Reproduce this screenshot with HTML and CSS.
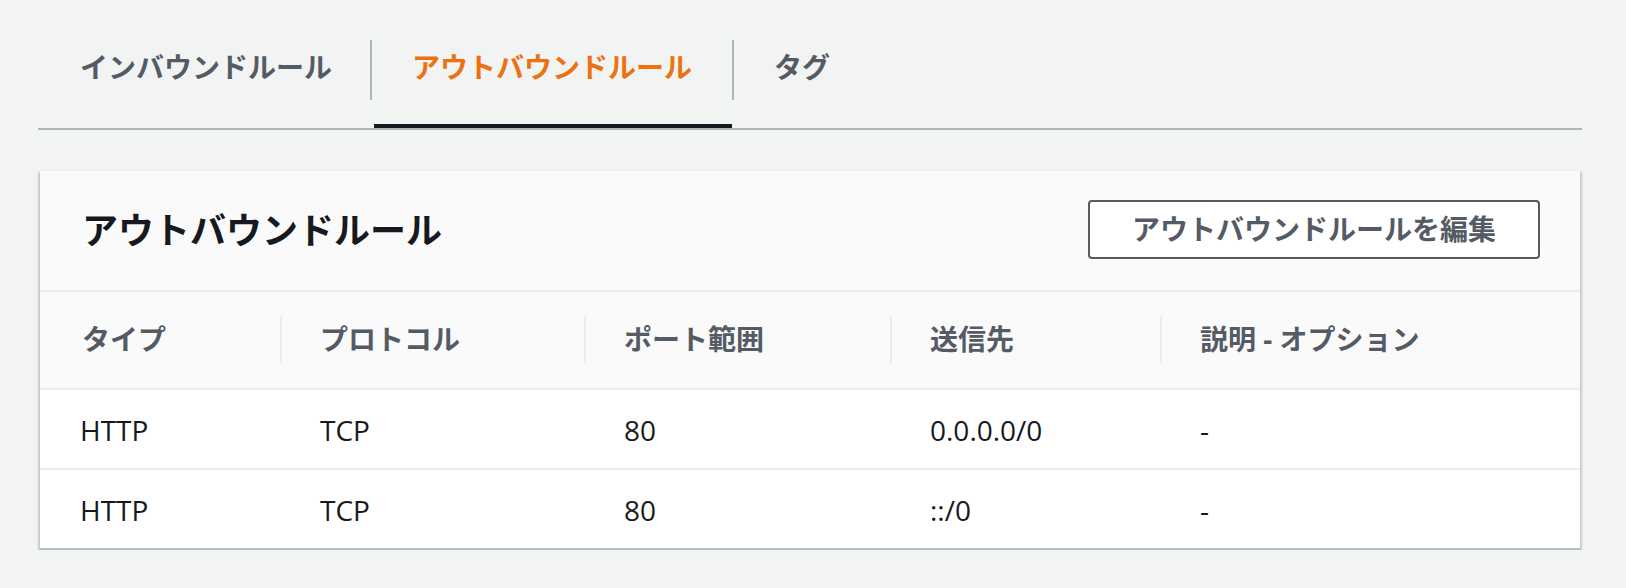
FILE: index.html
```html
<!DOCTYPE html>
<html lang="ja">
<head>
<meta charset="utf-8">
<title>アウトバウンドルール</title>
<link rel="stylesheet" href="styles.css">
</head>
<body>
<div class="page">
  <div class="tabs">
    <div class="tab"><span class="tab-link">インバウンドルール</span></div>
    <div class="tab tab-active"><span class="tab-link">アウトバウンドルール</span></div>
    <div class="tab"><span class="tab-link">タグ</span></div>
  </div>

  <div class="card">
    <div class="card-header">
      <h2 class="card-title">アウトバウンドルール</h2>
      <button class="btn">アウトバウンドルールを編集</button>
    </div>
    <table class="rules">
      <colgroup>
        <col class="c1"><col class="c2"><col class="c3"><col class="c4"><col class="c5">
      </colgroup>
      <thead>
        <tr>
          <th>タイプ</th>
          <th class="sep">プロトコル</th>
          <th class="sep">ポート範囲</th>
          <th class="sep">送信先</th>
          <th class="sep">説明 - オプション</th>
        </tr>
      </thead>
      <tbody>
        <tr>
          <td>HTTP</td>
          <td>TCP</td>
          <td>80</td>
          <td>0.0.0.0/0</td>
          <td>-</td>
        </tr>
        <tr>
          <td>HTTP</td>
          <td>TCP</td>
          <td>80</td>
          <td>::/0</td>
          <td>-</td>
        </tr>
      </tbody>
    </table>
  </div>
</div>
</body>
</html>
```

FILE: styles.css
```css
html, body {
  margin: 0;
  padding: 0;
  background: #f2f3f3;
}

body {
  font-family: "Open Sans", "Noto Sans CJK JP", sans-serif;
  font-size: 28px;
  color: #16191f;
}

.page {
  padding: 40px 44px 0 38px;
}

/* Tabs */
.tabs {
  display: flex;
  border-bottom: 2px solid #aab7b8;
}

.tab {
  position: relative;
  padding-bottom: 28px;
}

.tab-link {
  display: block;
  height: 60px;
  box-sizing: border-box;
  padding: 0 38px 6px 42px;
  line-height: 54px;
  font-weight: 700;
  color: #545b64;
  white-space: nowrap;
}

.tab + .tab .tab-link {
  border-left: 2px solid #aab7b8;
  padding-left: 40px;
  padding-right: 40px;
}

.tab-active .tab-link {
  color: #ec7211;
}

.tab-active::after {
  content: "";
  position: absolute;
  left: 4px;
  right: 0;
  bottom: 0;
  height: 4px;
  background: #16191f;
}

/* Card */
.card {
  margin: 41px 2px 0 2px;
  background: #ffffff;
  border-bottom: 2px solid #b4bebf;
  box-shadow: 0 2px 2px 0 rgba(0, 28, 36, 0.2),
              2px 1px 2px 0 rgba(0, 28, 36, 0.15),
              -2px 1px 2px 0 rgba(0, 28, 36, 0.15);
}

.card-header {
  display: flex;
  align-items: center;
  justify-content: space-between;
  height: 119px;
  padding: 0 40px 0 42px;
  background: #fafafa;
  border-bottom: 2px solid #eaeded;
}

.card-title {
  margin: 0;
  font-size: 36px;
  line-height: 44px;
  font-weight: 700;
  color: #16191f;
}

.btn {
  font-family: "Open Sans", "Noto Sans CJK JP", sans-serif;
  font-size: 28px;
  font-weight: 700;
  color: #545b64;
  background: #ffffff;
  border: 2px solid #545b64;
  border-radius: 4px;
  height: 59px;
  padding: 0 42px;
  line-height: 53px;
  margin-top: -2px;
}

/* Table */
.rules {
  width: 100%;
  border-collapse: collapse;
  table-layout: fixed;
}

.c1 { width: 240px; }
.c2 { width: 304px; }
.c3 { width: 306px; }
.c4 { width: 270px; }
.c5 { width: 420px; }

.rules th {
  position: relative;
  text-align: left;
  font-weight: 700;
  color: #545b64;
  background: #fafafa;
  padding: 28px 40px 30px 40px;
  line-height: 38px;
  white-space: nowrap;
}

.rules th:first-child {
  padding-left: 42px;
}

.rules th.sep::before {
  content: "";
  position: absolute;
  left: 0;
  top: 24px;
  width: 2px;
  height: 47px;
  background: #eaeded;
}

.rules td {
  border-top: 2px solid #eaeded;
  padding: 21px 40px 19px 40px;
  line-height: 38px;
  color: #16191f;
  white-space: nowrap;
}
```
